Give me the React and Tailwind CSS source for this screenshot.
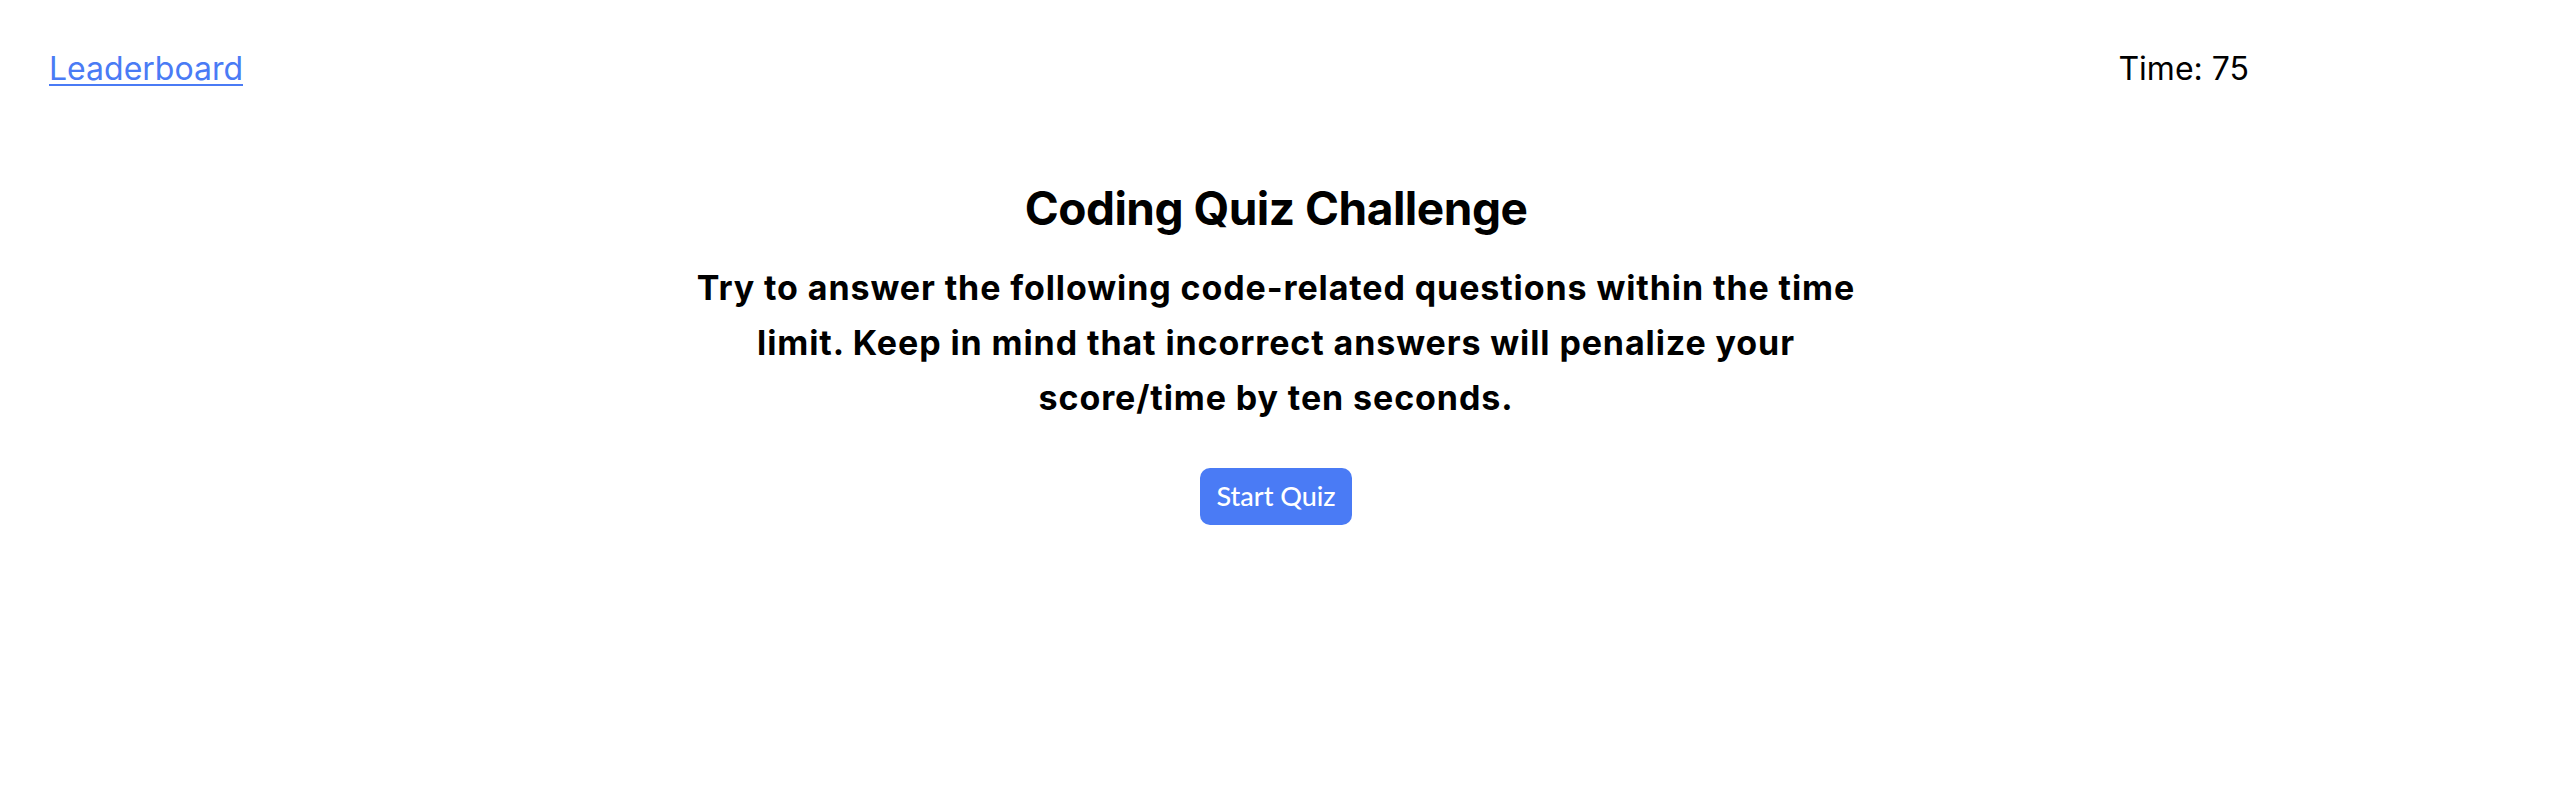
export default function App() {
    return (
        <div className="min-h-screen bg-white text-black font-['Inter',sans-serif]">
            {/* top bar */}
            <header className="flex items-center justify-between pt-[49px] pl-[49px] pr-[303px]">
                <a href="#" className="text-[32px] leading-[40px] text-[#4a7bf5] underline underline-offset-[4px] decoration-[2px]">
                    Leaderboard
                </a>
                <div className="text-[32px] leading-[40px]">Time: 75</div>
            </header>

            <main className="flex flex-col items-center pt-[91px] text-center">
                <h1 className="text-[46px] leading-[56px] font-bold tracking-[-0.5px]">Coding Quiz Challenge</h1>
                <p className="mt-[24px] max-w-[1180px] text-[34px] leading-[55px] font-bold tracking-[0.9px]">
                    Try to answer the following code-related questions within the time limit. Keep in mind that incorrect answers will penalize your score/time by ten seconds.
                </p>
                <button className="mt-[43px] h-[57px] w-[152px] rounded-[10px] bg-[#4a7bf5] text-[27px] font-medium text-white font-['Lato',sans-serif]">
                    Start Quiz
                </button>
            </main>
        </div>
    );
}
